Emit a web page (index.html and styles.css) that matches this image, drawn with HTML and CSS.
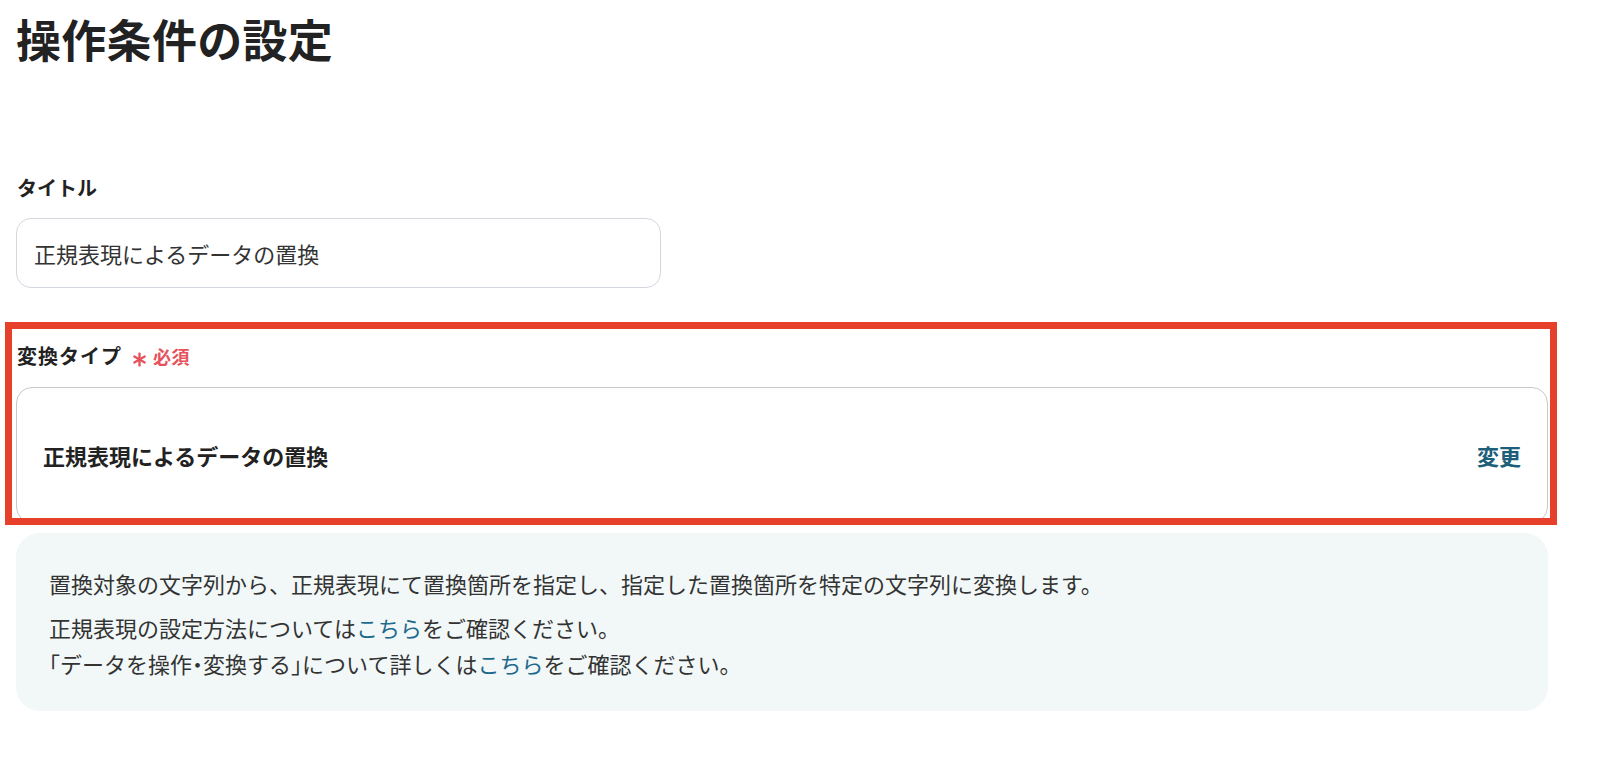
FILE: index.html
```html
<!DOCTYPE html>
<html lang="ja">
<head>
<meta charset="utf-8">
<title>操作条件の設定</title>
<link rel="stylesheet" href="styles.css">
</head>
<body>
<main class="page">
  <h1 class="page-title">操作条件の設定</h1>

  <section class="field field-title">
    <div class="field-label">タイトル</div>
    <div class="text-input">正規表現によるデータの置換</div>
  </section>

  <section class="field field-type">
    <div class="field-label">変換タイプ<span class="required"><svg class="required-mark" viewBox="0 0 14 14" width="15" height="15"><g stroke="currentColor" stroke-width="2.2" stroke-linecap="round"><line x1="7" y1="1.5" x2="7" y2="12.5"/><line x1="2.2" y1="4.2" x2="11.8" y2="9.8"/><line x1="2.2" y1="9.8" x2="11.8" y2="4.2"/></g></svg>必須</span></div>
    <div class="select-box">
      <span class="select-value">正規表現によるデータの置換</span>
      <a class="select-change" href="#">変更</a>
    </div>
    <div class="highlight-frame"></div>
  </section>

  <div class="info-box">
    <p class="info-para">置換対象の文字列から、正規表現にて置換箇所を指定し、指定した置換箇所を特定の文字列に変換します。</p>
    <p class="info-para">正規表現の設定方法については<a class="info-link" href="#">こちら</a>をご確認ください。<br><span class="half">「</span>データを操作<span class="half">・</span>変換する<span class="half">」</span>について詳しくは<a class="info-link" href="#">こちら</a>をご確認ください。</p>
  </div>
</main>
</body>
</html>
```

FILE: styles.css
```css
* {
  box-sizing: border-box;
}

html, body {
  margin: 0;
  padding: 0;
  background: #ffffff;
}

body {
  font-family: "Noto Sans CJK JP", "Noto Sans", sans-serif;
  color: #333333;
}

.page {
  padding: 7px 52px 40px 16px;
}

.page-title {
  margin: 0;
  font-size: 45px;
  line-height: 64px;
  font-weight: 700;
  color: #222222;
  letter-spacing: 0.3px;
}

.field {
  display: flex;
  flex-direction: column;
}

.field-title {
  margin-top: 103px;
}

.field-label {
  display: flex;
  align-items: center;
  font-size: 20px;
  line-height: 28px;
  font-weight: 700;
  color: #222222;
  padding-left: 1px;
}

.text-input {
  margin-top: 16px;
  width: 645px;
  height: 70px;
  border: 1.5px solid #d3d7de;
  border-radius: 15px;
  display: flex;
  align-items: center;
  padding-left: 17px;
  font-size: 22px;
  color: #333333;
  background: #ffffff;
}

.field-type {
  position: relative;
  margin-top: 54px;
}

.field-type .field-label {
  letter-spacing: 1px;
}

.required {
  display: inline-flex;
  align-items: center;
  margin-left: 10px;
  font-size: 18px;
  font-weight: 700;
  color: #e5525c;
  letter-spacing: 0.5px;
}

.required-mark {
  margin-right: 6px;
  margin-top: 6px;
}

.select-box {
  margin-top: 17px;
  height: 136px;
  border: 1.5px solid #c9c9c9;
  border-radius: 16px;
  display: flex;
  align-items: center;
  justify-content: space-between;
  padding: 0 26px 0 26px;
  background: #ffffff;
}

.select-value {
  font-size: 22px;
  font-weight: 700;
  color: #222222;
}

.select-change {
  font-size: 22px;
  font-weight: 700;
  color: #1d5f7a;
  text-decoration: none;
}

.highlight-frame {
  position: absolute;
  top: -20px;
  left: -11px;
  right: -9px;
  bottom: -2px;
  border: 7px solid #e6402a;
  pointer-events: none;
}

.info-box {
  margin-top: 10px;
  background: #f2f8f8;
  border-radius: 24px;
  padding: 32px 34px 30px 33px;
}

.info-para {
  margin: 0;
  font-size: 22px;
  line-height: 36px;
  color: #333333;
}

.info-para + .info-para {
  margin-top: 8px;
}

.half {
  font-feature-settings: "halt";
}

.info-link {
  color: #1e6a8c;
  text-decoration: none;
}
```
